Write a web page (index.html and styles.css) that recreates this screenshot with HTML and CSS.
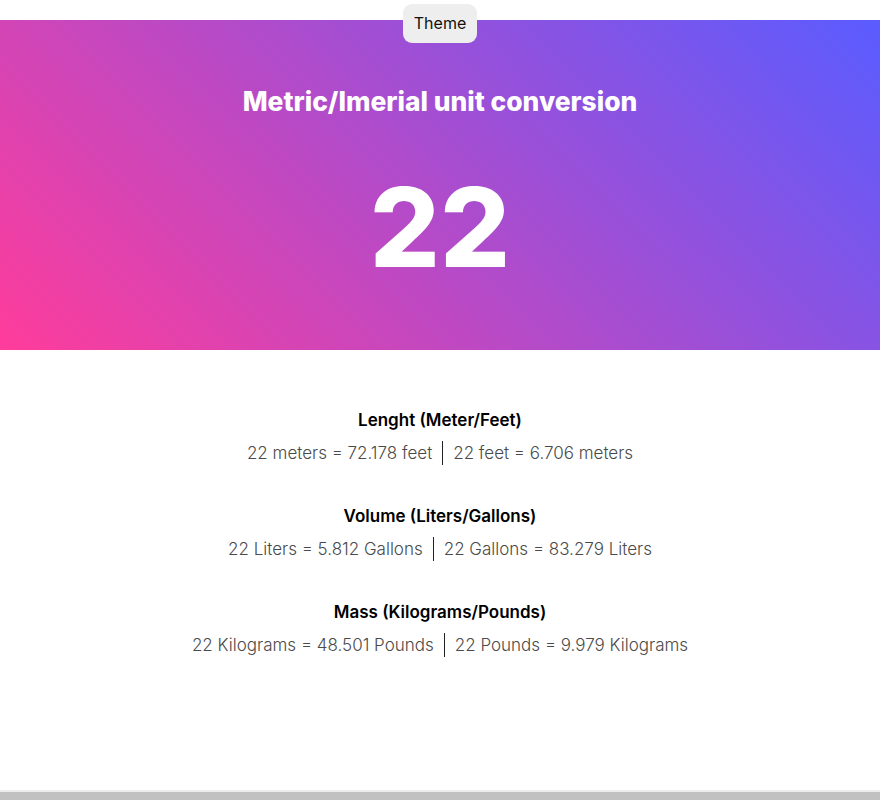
FILE: index.html
```html
<!DOCTYPE html>
<html lang="en">
<head>
<meta charset="utf-8">
<title>Unit conversion</title>
<link rel="stylesheet" href="styles.css">
</head>
<body>
<div class="page">
  <button class="theme-btn">Theme</button>
  <header class="hero">
    <h1 class="hero-title">Metric/Imerial unit conversion</h1>
    <div class="hero-value">22</div>
  </header>
  <main class="results">
    <section class="group">
      <h2 class="group-title">Lenght (Meter/Feet)</h2>
      <p class="group-line"><span>22 meters = 72.178 feet</span><span class="sep"></span><span>22 feet = 6.706 meters</span></p>
    </section>
    <section class="group">
      <h2 class="group-title">Volume (Liters/Gallons)</h2>
      <p class="group-line"><span>22 Liters = 5.812 Gallons</span><span class="sep"></span><span>22 Gallons = 83.279 Liters</span></p>
    </section>
    <section class="group">
      <h2 class="group-title">Mass (Kilograms/Pounds)</h2>
      <p class="group-line"><span>22 Kilograms = 48.501 Pounds</span><span class="sep"></span><span>22 Pounds = 9.979 Kilograms</span></p>
    </section>
  </main>
  <div class="bottom-bar"></div>
</div>
</body>
</html>
```
FILE: styles.css
```css
* { box-sizing: border-box; }
html, body { margin: 0; padding: 0; background: #fff; }
body { font-family: Inter, "Noto Sans", sans-serif; }
.page {
  position: relative;
  min-height: 800px;
  display: flex;
  flex-direction: column;
  padding-top: 20px;
}
.theme-btn {
  position: absolute;
  top: 4px;
  left: 403px;
  width: 74px;
  height: 39px;
  border: none;
  border-radius: 9px;
  background: #eeeeee;
  color: #111;
  font-family: Inter, sans-serif;
  font-size: 16px;
  padding: 0;
  padding-bottom: 2px;
}
.hero {
  height: 330px;
  background: linear-gradient(45deg, #ff3c9b, #5a5cff);
  color: #fff;
  display: flex;
  flex-direction: column;
  align-items: center;
}
.hero-title {
  margin: 65px 0 0;
  font-size: 26.4px;
  font-weight: 800;
  line-height: 32px;
  letter-spacing: 0;
}
.hero-value {
  margin-top: 45px;
  font-size: 110px;
  font-weight: 800;
  line-height: 130px;
}
.results {
  flex: 1;
  display: flex;
  flex-direction: column;
  align-items: center;
  padding-top: 59px;
  gap: 40px;
}
.group { text-align: center; }
.group-title {
  margin: 0;
  font-size: 17px;
  font-weight: 600;
  line-height: 22px;
  color: #000;
}
.group-line {
  margin: 10px 0 0;
  display: flex;
  align-items: center;
  justify-content: center;
  font-size: 17px;
  font-weight: 300;
  color: #4a4a4a;
  line-height: 24px;
}
.sep {
  display: inline-block;
  width: 1px;
  height: 24px;
  background: #222;
  margin: 0 10px;
}
.bottom-bar {
  height: 10px;
  border-top: 2px solid #ececec;
  background: #c1c1c1;
}
```
